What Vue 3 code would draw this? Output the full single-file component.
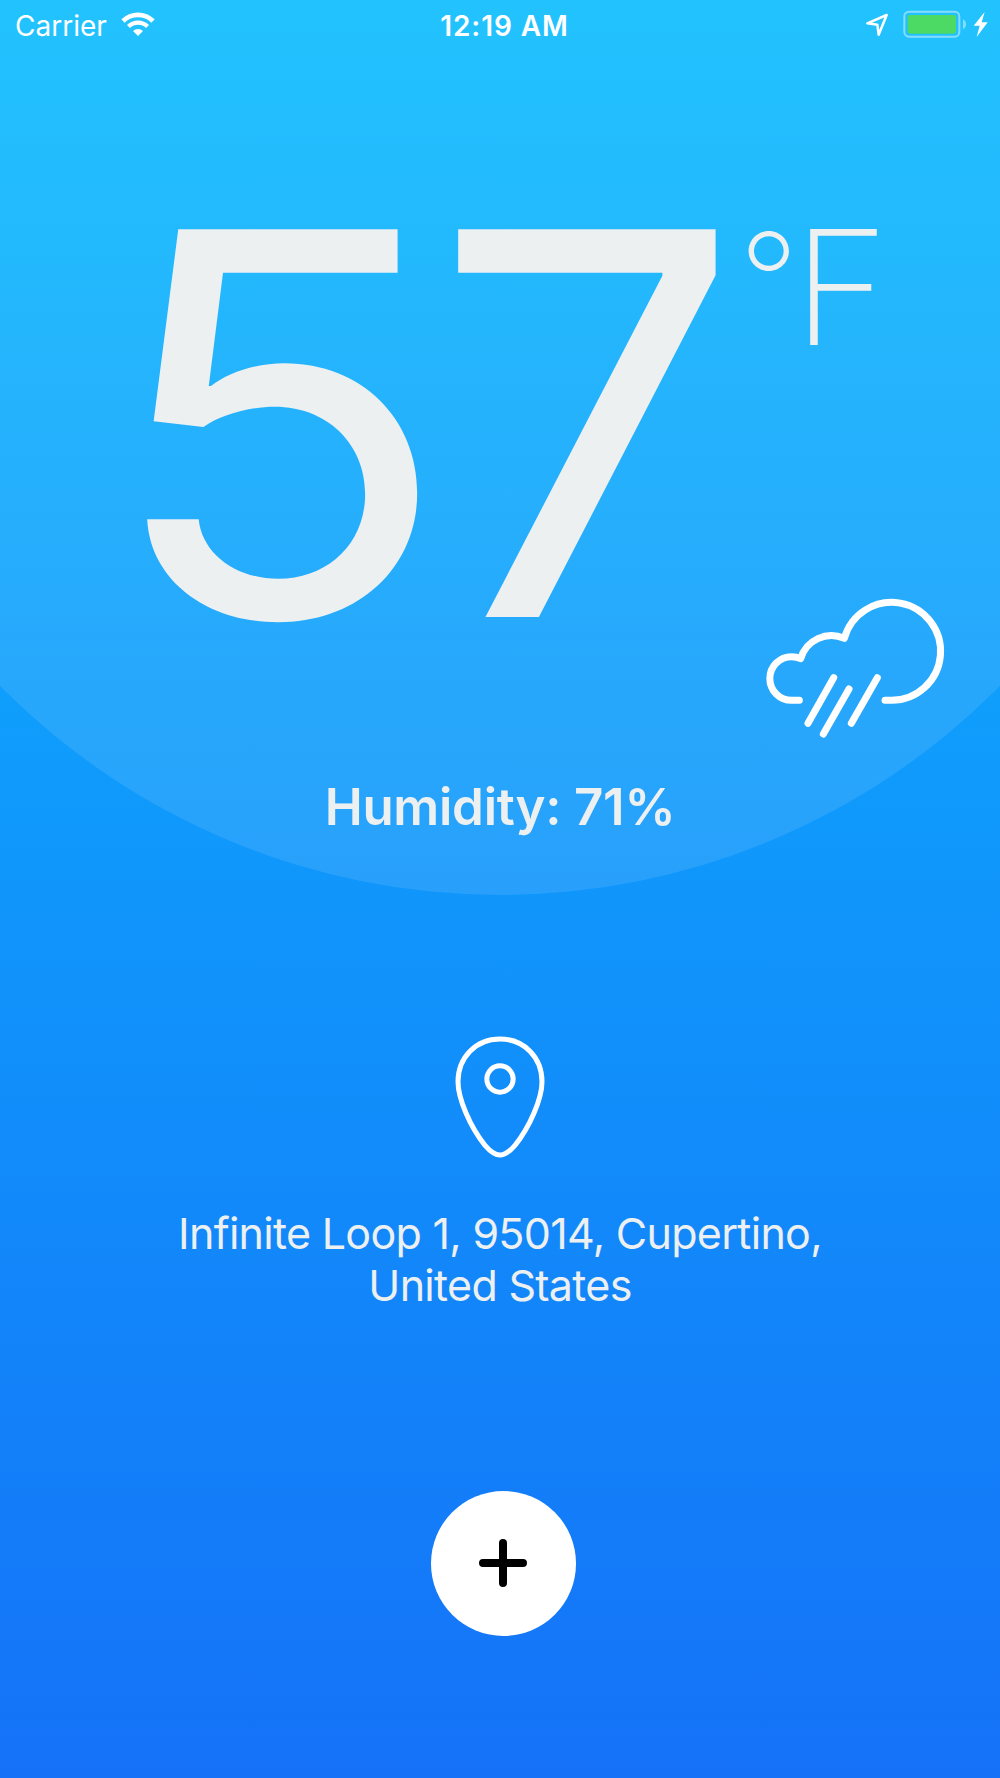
<template>
<main class="screen">

  <!-- Status bar -->
  <header class="status-bar">
    <div class="status-left">
      <span class="carrier">{{ status.carrier }}</span>
      <svg class="wifi" viewBox="0 0 102 150" fill="#fff">
        <path d="M1 58A71 71 0 0 1 101 58L91 68A57 57 0 0 0 11 68Z"/>
        <path d="M18 75A47 47 0 0 1 84 75L75 84A34 34 0 0 0 27 84Z"/>
        <path d="M36 93A21 21 0 0 1 66 93L51 108Z"/>
      </svg>
    </div>

    <div class="time">{{ status.time }}</div>

    <div class="status-right">
      <svg class="locate" viewBox="75 0 75 150">
        <path d="M140 45L82 70L112 74L116 104Z" fill="none" stroke="#fff" stroke-width="7.5" stroke-linejoin="round"/>
      </svg>
      <svg class="battery" viewBox="186 0 195 150">
        <rect x="193" y="35" width="165" height="75" rx="14" fill="none" stroke="#fff" stroke-opacity=".45" stroke-width="6"/>
        <rect x="203" y="45" width="145" height="56" rx="7" fill="#4cd964"/>
        <path d="M369 58Q378 63 378 73T369 88Z" fill="#fff" fill-opacity=".45"/>
      </svg>
      <svg class="bolt" viewBox="399 0 48 150">
        <path d="M434 36L401 77H419L410 111L443 67H425Z" fill="#fff"/>
      </svg>
    </div>
  </header>

  <!-- Weather -->
  <section class="weather">
    <div class="temperature">
      <div class="degrees">
        <span v-for="(digit, i) in digits" :key="i" class="digit">{{ digit }}</span>
      </div>
      <div class="unit">
        <span class="ring">°</span>
        <span class="letter">F</span>
      </div>
    </div>

    <svg class="condition" viewBox="0 0 630 510" fill="none" stroke="#fff" stroke-width="21" stroke-linecap="round" stroke-linejoin="round">
      <path d="M148 361H125A65.5 65.5 0 0 1 125 230Q140 230 152 236A96 96 0 0 1 283 175A147 147 0 1 1 425 361H405"/>
      <path d="M251 293L174 430M297 327L220 462M382 293L304 430"/>
    </svg>

    <div class="humidity">Humidity: {{ weather.humidity }}%</div>
  </section>

  <!-- Location -->
  <section class="location">
    <svg class="pin" viewBox="0 0 360 450" fill="none" stroke="#fff" stroke-width="15">
      <path d="M180 57C108 57 54 112 54 185C54 235 90 320 135 376Q160 405 180 405T225 376C270 320 306 235 306 185C306 112 252 57 180 57Z"/>
      <circle cx="180" cy="177" r="39.5"/>
    </svg>
    <p class="address">{{ address[0] }}<br/>{{ address[1] }}</p>
  </section>

  <button class="add-btn" aria-label="Add">
    <svg viewBox="0 0 48 48" stroke="#000" stroke-width="8" stroke-linecap="round">
      <path d="M24 4V44M4 24H44"/>
    </svg>
  </button>

</main>
</template>


<script setup>
import { ref, computed } from 'vue'

const status = ref({
  carrier:'Carrier',
  time:'12:19 AM'
})

const weather = ref({
  temperature:57,
  humidity:71
})

const digits = computed(()=> String(weather.value.temperature).split(''))

const address = ref(['Infinite Loop 1, 95014, Cupertino,', 'United States'])
</script>


<style>
body{
  margin:0;
}
</style>

<style scoped>

.screen{
  position:relative;
  display:flex;
  flex-direction:column;
  align-items:center;
  box-sizing:border-box;
  width:1000px;
  height:1778px;
  overflow:hidden;
  font-family:Inter, "Liberation Sans", sans-serif;
  color:#ecf0f1;
  background:linear-gradient(#09bcfe, #0f9efc 38.8%, #1572f8);
}

/* big pale disc behind the weather */
.screen::before{
  content:'';
  position:absolute;
  top:-509px;
  left:-202px;
  width:1404px;
  height:1404px;
  border-radius:50%;
  background:rgba(255,255,255,0.1);
}

.status-bar{
  position:relative;
  display:grid;
  grid-template-columns:1fr auto 1fr;
  box-sizing:border-box;
  width:100%;
  height:50px;
  padding:0 11px 0 15px;
  color:#fff;
  font-size:28px;
  line-height:52px;
}

.status-left,
.status-right{
  display:flex;
}

.status-left{
  gap:14px;
}

.status-right{
  justify-content:flex-end;
}

.time{
  padding-left:5px;
  font-weight:600;
  letter-spacing:0.9px;
}

.wifi{
  width:34px;
  height:50px;
}

.locate{
  width:25px;
  height:50px;
  margin-right:12px;
}

.battery{
  width:65px;
  height:50px;
  margin-right:6px;
}

.bolt{
  width:16px;
  height:50px;
}

.weather{
  position:relative;
  display:flex;
  flex-direction:column;
  width:100%;
  height:845px;
}

.temperature{
  display:flex;
  align-items:flex-start;
  height:388px;
  margin-top:179px;
  padding-left:103px;
  white-space:nowrap;
}

.degrees{
  display:flex;
  width:636px;
  font-size:533px;
  line-height:389px;
}

.digit{
  transform:scaleX(1.075);
  transform-origin:0 50%;
}

.digit + .digit{
  margin-left:5px;
  transform:scaleX(1.027);
}

.unit{
  display:flex;
  align-items:flex-start;
  font-size:159px;
  font-weight:200;
  line-height:116px;
}

.ring{
  width:54px;
  margin-top:3px;
  font-size:131px;
  line-height:95px;
}

.letter{
  transform:scaleX(1.03);
  transform-origin:0 50%;
}

.condition{
  align-self:flex-end;
  width:210px;
  height:170px;
  margin:-37px 40px 0 0;
}

.humidity{
  margin-top:26px;
  text-align:center;
  font-size:51px;
  font-weight:600;
  letter-spacing:-0.26px;
  line-height:61px;
}

.location{
  display:flex;
  flex-direction:column;
  align-items:center;
  margin-top:125px;
}

.pin{
  width:120px;
  height:150px;
}

.address{
  margin:38px 0 0;
  text-align:center;
  font-size:43px;
  letter-spacing:-0.7px;
  line-height:51.5px;
}

.add-btn{
  display:flex;
  align-items:center;
  justify-content:center;
  width:145px;
  height:145px;
  margin:179.5px 0 0 6px;
  padding:0;
  border:none;
  border-radius:50%;
  background:#fff;
  cursor:pointer;
}

.add-btn svg{
  width:48px;
  height:48px;
}

</style>
